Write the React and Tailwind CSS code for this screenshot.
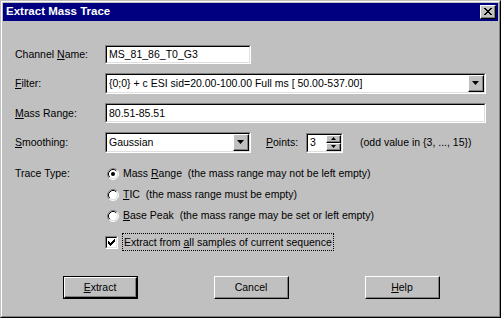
import React from "react";

const font = "font-['Liberation_Sans',Arial,sans-serif]";

function Sunken({ className = "", inner = "", children }) {
  return (
    <div className={`border border-t-[#808080] border-l-[#808080] border-b-white border-r-white ${className}`}>
      <div className={`h-full border border-t-black border-l-black border-b-[#dfdfdf] border-r-[#dfdfdf] bg-white flex items-center ${inner}`}>
        {children}
      </div>
    </div>
  );
}

function Raised({ className = "", children }) {
  return (
    <div className={`border border-t-white border-l-white border-b-black border-r-black bg-[#c0c0c0] ${className}`}>
      <div className="h-full border border-t-0 border-l-0 border-b-[#808080] border-r-[#808080] flex items-center justify-center">
        {children}
      </div>
    </div>
  );
}

function U({ children }) {
  return <span className="underline underline-offset-[1px]">{children}</span>;
}

function DropButton() {
  return (
    <Raised className="w-[16px] h-full">
      <svg width="7" height="4" viewBox="0 0 7 4">
        <path d="M0 0h7L3.5 4z" fill="#000" />
      </svg>
    </Raised>
  );
}

function Combo({ className, text }) {
  return (
    <Sunken className={className} inner="pl-[2px] pr-0">
      <span className="flex-1 whitespace-nowrap overflow-hidden">{text}</span>
      <DropButton />
    </Sunken>
  );
}

// win95 style radio: two-tone rings, white well, black dot
function Radio({ checked }) {
  return (
    <svg width="12" height="12" viewBox="0 0 12 12" className="shrink-0">
      <circle cx="6" cy="6" r="5" fill="#fff" />
      <path d="M2.11 9.89 A5.5 5.5 0 0 1 9.89 2.11" stroke="#808080" fill="none" />
      <path d="M2.11 9.89 A5.5 5.5 0 0 0 9.89 2.11" stroke="#fff" fill="none" />
      <path d="M2.82 9.18 A4.5 4.5 0 0 1 9.18 2.82" stroke="#000" fill="none" />
      <path d="M2.82 9.18 A4.5 4.5 0 0 0 9.18 2.82" stroke="#dfdfdf" fill="none" />
      {checked && <circle cx="6" cy="6" r="2" fill="#000" />}
    </svg>
  );
}

export default function App() {
  return (
    <div className={`w-[501px] h-[318px] bg-[#c0c0c0] border border-t-[#c0c0c0] border-l-[#c0c0c0] border-b-black border-r-black ${font} text-[10.5px] text-black leading-none`}>
      <div className="h-full border border-t-white border-l-white border-b-[#808080] border-r-[#808080] p-px flex flex-col">
        {/* Title bar */}
        <div className="h-[18px] bg-[#000080] flex items-center pl-[3px] pr-[2px] shrink-0">
          <span className="text-white font-bold text-[11.5px] flex-1">Extract Mass Trace</span>
          <Raised className="w-[16px] h-[14px]">
            <svg width="8" height="7" viewBox="0 0 8 7">
              <path d="M0 0h2v1h1v1h2v-1h1v-1h2v1h-1v1h-1v1h-1v1h1v1h1v1h1v1h-2v-1h-1v-1h-2v1h-1v1h-2v-1h1v-1h1v-1h1v-1h-1v-1h-1v-1h-1z" fill="#000" />
            </svg>
          </Raised>
        </div>

        <div className="flex flex-col pl-[12px]">
          {/* Channel Name */}
          <div className="flex items-center mt-[24px] h-[19px]">
            <span className="w-[90px]">Channel <U>N</U>ame:</span>
            <Sunken className="w-[146px] h-full" inner="pl-[2px]">
              <span>MS_81_86_T0_G3</span>
            </Sunken>
          </div>

          {/* Filter */}
          <div className="flex items-center mt-[9px] h-[21px]">
            <span className="w-[90px]"><U>F</U>ilter:</span>
            <Combo className="w-[381px] h-full" text="{0;0} + c ESI sid=20.00-100.00 Full ms [ 50.00-537.00]" />
          </div>

          {/* Mass Range */}
          <div className="flex items-center mt-[9px] h-[20px]">
            <span className="w-[90px]"><U>M</U>ass Range:</span>
            <Sunken className="w-[381px] h-full" inner="pl-[2px]">
              <span>80.51-85.51</span>
            </Sunken>
          </div>

          {/* Smoothing */}
          <div className="flex items-center mt-[9px] h-[21px]">
            <span className="w-[90px]"><U>S</U>moothing:</span>
            <Combo className="w-[146px] h-full" text="Gaussian" />
            <span className="ml-[15px] w-[40px]"><U>P</U>oints:</span>
            <Sunken className="w-[37px] h-[20px]" inner="pl-[2px]">
              <span className="flex-1">3</span>
              <div className="flex flex-col w-[15px] h-full">
                <Raised className="h-1/2 w-full">
                  <svg width="5" height="3" viewBox="0 0 5 3"><path d="M2.5 0L5 3H0z" fill="#000" /></svg>
                </Raised>
                <Raised className="h-1/2 w-full">
                  <svg width="5" height="3" viewBox="0 0 5 3"><path d="M0 0h5L2.5 3z" fill="#000" /></svg>
                </Raised>
              </div>
            </Sunken>
            <span className="ml-[17px]">(odd value in {"{"}3, ..., 15{"}"})</span>
          </div>

          {/* Trace Type */}
          <div className="flex mt-[10px]">
            <span className="w-[90px] h-[21px] flex items-center">Trace Type:</span>
            <div className="flex flex-col">
              {[
                { key: "R", pre: "Mass ", rest: "ange", note: "(the mass range may not be left empty)", checked: true },
                { key: "T", pre: "", rest: "IC", note: "(the mass range must be empty)" },
                { key: "B", pre: "", rest: "ase Peak", note: "(the mass range may be set or left empty)" },
              ].map(r => (
                <div key={r.key} className="flex items-center h-[21px] pl-[2px]">
                  <Radio checked={r.checked} />
                  <span className="ml-[4px] whitespace-pre">
                    {r.pre}<U>{r.key}</U>{r.rest}{"  "}{r.note}
                  </span>
                </div>
              ))}
            </div>
          </div>

          {/* Extract from all samples */}
          <div className="flex items-center mt-[6px] h-[20px] pl-[90px]">
            <Sunken className="w-[13px] h-[13px]" inner="justify-center">
              <svg width="7" height="7" viewBox="0 0 7 7">
                <path d="M6 0h1v3h-1v1h-1v1h-1v1h-1v1h-1v-1h-1v-1h-1v-3h1v1h1v1h1v-1h1v-1h1v-1h1z" fill="#000" />
              </svg>
            </Sunken>
            <span className="ml-[4px] border border-dotted border-black px-px py-[3px]">
              Extract from <U>a</U>ll samples of current sequence
            </span>
          </div>

          {/* Buttons */}
          <div className="flex mt-[24px] pl-[48px] gap-[76px]">
            <div className="border border-black">
              <Raised className="w-[73px] h-[21px]">
                <span><U>E</U>xtract</span>
              </Raised>
            </div>
            <Raised className="w-[75px] h-[23px]">
              <span>Cancel</span>
            </Raised>
            <Raised className="w-[75px] h-[23px]">
              <span><U>H</U>elp</span>
            </Raised>
          </div>
        </div>
      </div>
    </div>
  );
}
